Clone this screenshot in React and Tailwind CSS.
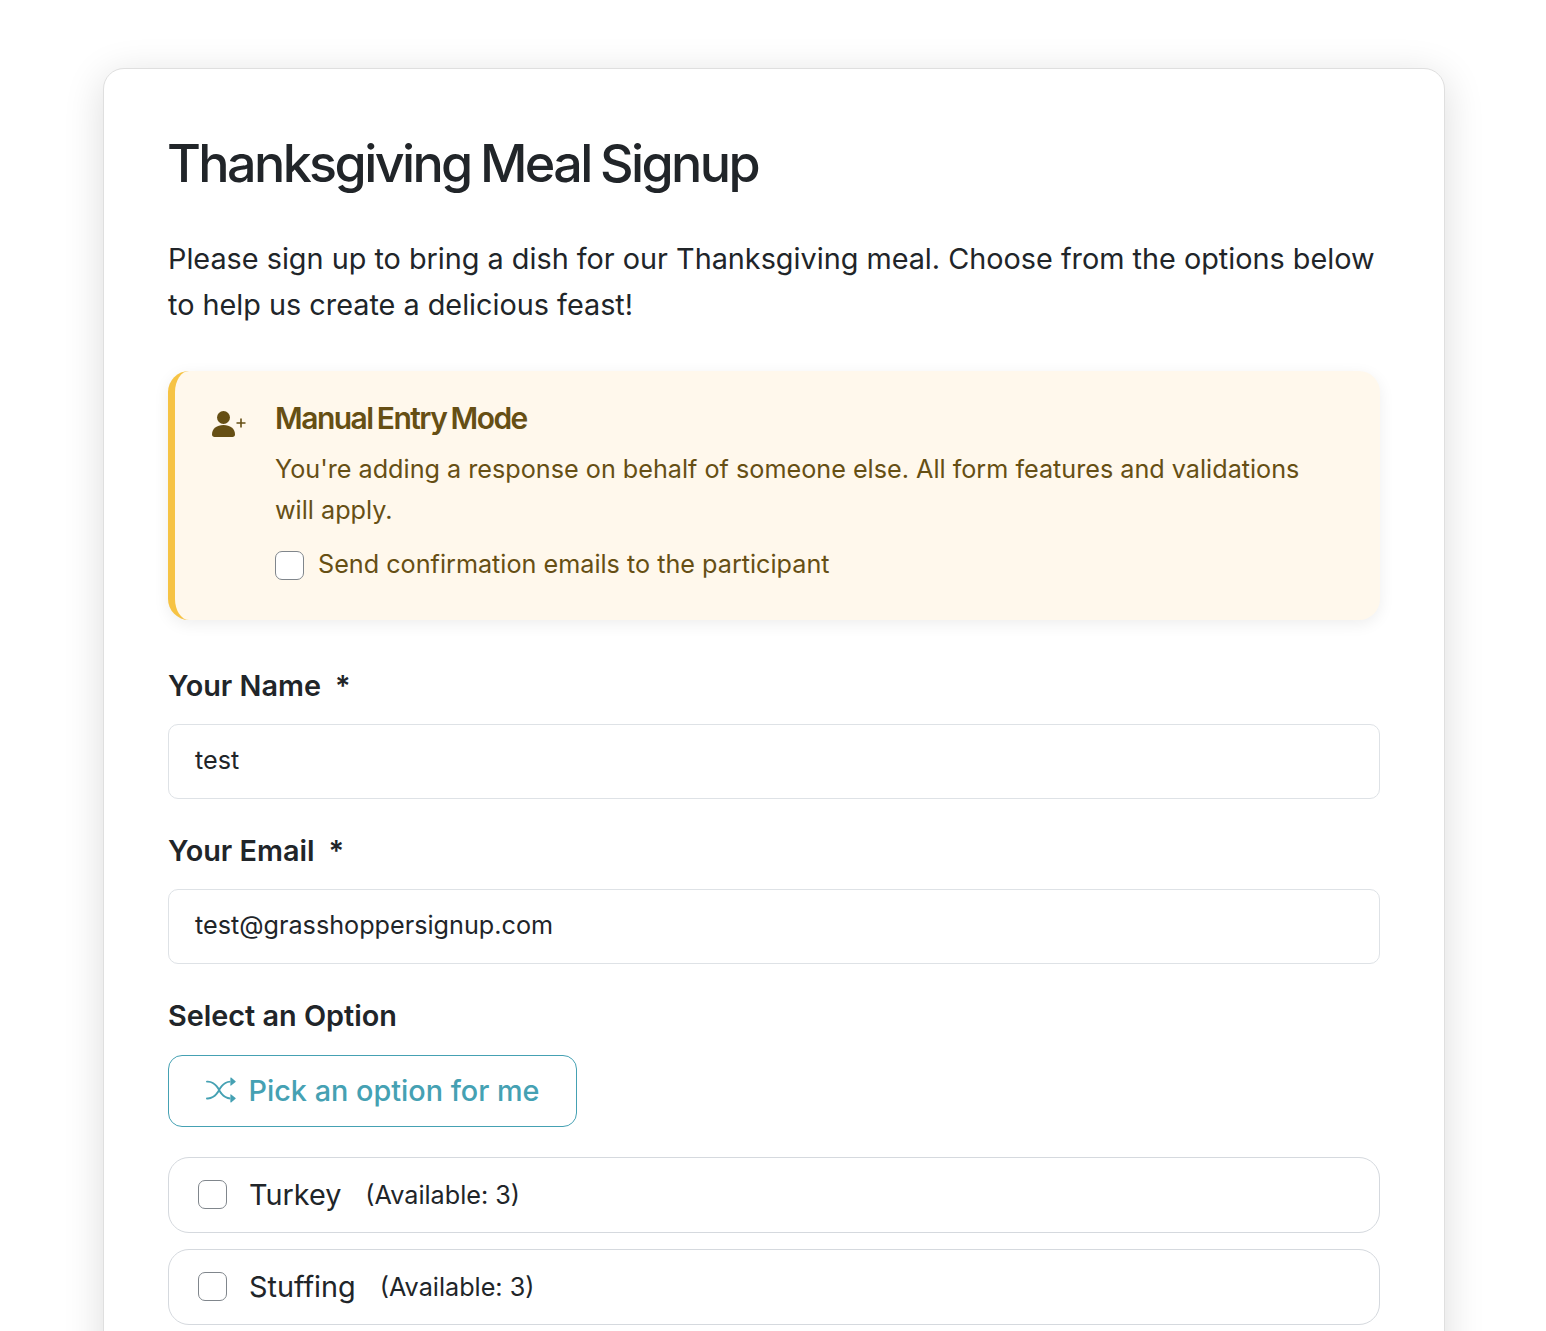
import { BsShuffle } from "react-icons/bs";

function Check({ className = "" }) {
  return <span className={`block w-[29px] h-[29px] shrink-0 rounded-[7px] border border-[#80868c] bg-white ${className}`} />;
}

function Field({ label, value, className = "" }) {
  return (
    <div className={className}>
      <label className="block text-[28.8px] leading-[44px] font-semibold text-[#212529] mb-[16px]">
        {label}<span className="ml-[14px]">*</span>
      </label>
      <div className="h-[75px] pb-[2px] flex items-center px-[26px] rounded-[10px] border border-[#dee2e6] bg-white text-[25.2px] text-[#212529]">
        {value}
      </div>
    </div>
  );
}

function Option({ name }) {
  return (
    <div className="h-[76px] mb-[16px] flex items-center pl-[29px] rounded-[21px] border border-[#d5d9de] bg-white text-[#212529]">
      <Check className="-mt-[2px]" />
      <span className="ml-[22px] text-[28.8px]">{name}</span>
      <span className="ml-[24px] mt-[2px] text-[25.2px]">(Available: 3)</span>
    </div>
  );
}

export default function App() {
  return (
    <div className="h-[1331px] overflow-hidden bg-white pt-[68px] font-['Inter',sans-serif]">
      <div className="mx-auto w-[1342px] translate-x-[1px] rounded-[21px] border border-[#dfdfdf] bg-white px-[64px] pt-[60px] pb-[64px] shadow-[0_8px_40px_rgba(0,0,0,0.14)]">
        <h1 className="-ml-[1px] text-[52px] leading-[70px] font-medium tracking-[-0.05em] [word-spacing:-2px] text-[#212529]">Thanksgiving Meal Signup</h1>
        <p className="mt-[37px] text-[28.8px] leading-[46px] text-[#212529]">
          Please sign up to bring a dish for our Thanksgiving meal. Choose from the options below to help us create a delicious feast!
        </p>
        <div className="mt-[43px] flex h-[249px] rounded-[21px] border-l-[7px] border-[#f6c344] bg-[#fff8ec] pl-[37px] pt-[27px] shadow-[0_4px_16px_rgba(0,0,0,0.07)] text-[#664f14]">
          <svg width="34" height="26" viewBox="0 0 34 26" fill="currentColor" className="mt-[13px] shrink-0">
            <circle cx="11.5" cy="6.5" r="6.5" />
            <path d="M0 23.5C0 17.5 5 14 11.5 14S23 17.5 23 23.5C23 25 22 26 20.5 26H2.5C1 26 0 25 0 23.5Z" />
            <path d="M29 7.5V16.5M24.5 12H33.5" stroke="currentColor" strokeWidth="1.6" fill="none" />
          </svg>
          <div className="ml-[29px] flex-1 pr-[60px]">
            <div className="text-[30px] leading-[40px] font-semibold tracking-[-0.05em] [word-spacing:-2px]">Manual Entry Mode</div>
            <p className="mt-[11px] text-[25.2px] leading-[41px]">You're adding a response on behalf of someone else. All form features and validations will apply.</p>
            <div className="mt-[20px] flex items-center">
              <Check />
              <span className="ml-[14px] -mt-[3px] text-[25.2px] leading-[30px]">Send confirmation emails to the participant</span>
            </div>
          </div>
        </div>
        <Field className="mt-[44px]" label="Your Name" value="test" />
        <Field className="mt-[30px]" label="Your Email" value="test@grasshoppersignup.com" />
        <div className="mt-[30px] mb-[17px] text-[28.8px] leading-[44px] font-semibold text-[#212529]">Select an Option</div>
        <button className="flex h-[72px] w-[409px] items-center justify-center gap-[13px] rounded-[14px] border border-[#45a1b3] bg-white text-[28.8px] font-medium text-[#45a1b3]">
          <BsShuffle size={30} className="-mt-[2px]" />
          Pick an option for me
        </button>
        <div className="mt-[30px]">
          <Option name="Turkey" />
          <Option name="Stuffing" />
        </div>
      </div>
    </div>
  );
}
